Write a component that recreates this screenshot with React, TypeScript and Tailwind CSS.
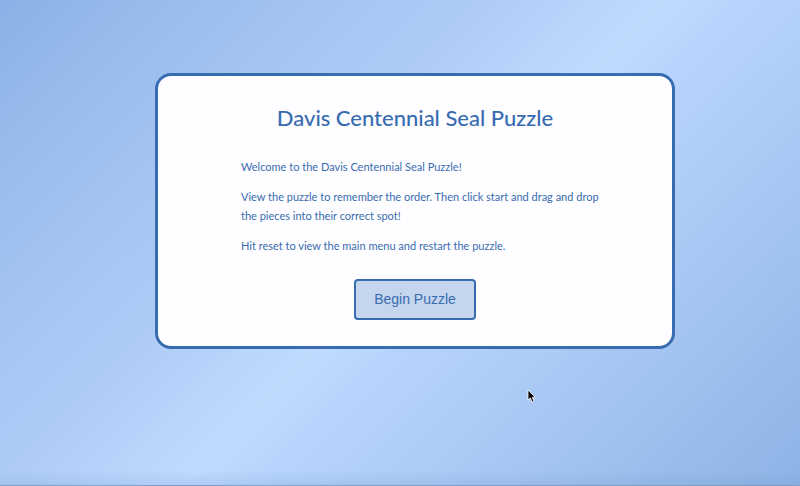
export default function App() {
  return (
    <main className="relative flex min-h-screen flex-col items-stretch bg-[linear-gradient(135deg,#8ab1e6_0%,#98bbeb_12%,#a6c6f2_27%,#adcbf5_37%,#b9d5fc_46%,#c1dbff_52%,#b7d4fc_58%,#aecdf6_68%,#a3c4f1_79%,#98bcea_89%,#8db3e6_100%)] pt-[73px] pr-[125px] pl-[155px] font-['Lato','Open_Sans',sans-serif] text-[#386cb0]">
      <section className="flex flex-col items-center rounded-2xl border-3 border-[#386cb0] bg-[#fefdff] px-6 pt-[23px] pb-[26px]">
        <h1 className="text-[22px] leading-[38px] font-medium">Davis Centennial Seal Puzzle</h1>
        <div className="mt-5 -mr-3 flex w-[360px] max-w-full flex-col gap-[11px] text-[11px] leading-[19px]">
          <p>Welcome to the Davis Centennial Seal Puzzle!</p>
          <p>View the puzzle to remember the order. Then click start and drag and drop the pieces into their correct spot!</p>
          <p>Hit reset to view the main menu and restart the puzzle.</p>
        </div>
        <button
          type="button"
          className="mt-6 rounded-sm border-2 border-[#386cb0] bg-[#c6d5ee] px-[18px] py-2 font-['Liberation_Sans',Arial,sans-serif] text-sm leading-[21px]"
        >
          Begin Puzzle
        </button>
      </section>
      <div className="pointer-events-none absolute inset-x-0 bottom-0 h-4 border-b border-[#7f9fc9] bg-linear-to-t from-[#7396c4]/20 to-transparent" />
      <svg className="pointer-events-none absolute top-[389px] left-[527px] h-[14px] w-[9px]" viewBox="0 0 9 14" aria-hidden="true">
        <path d="M1 1v10l2.3-2.1 1.8 4 1.8-.8-1.7-3.8h3L1 1Z" fill="#000" stroke="#fff" strokeWidth=".8" strokeLinejoin="round" />
      </svg>
    </main>
  );
}
